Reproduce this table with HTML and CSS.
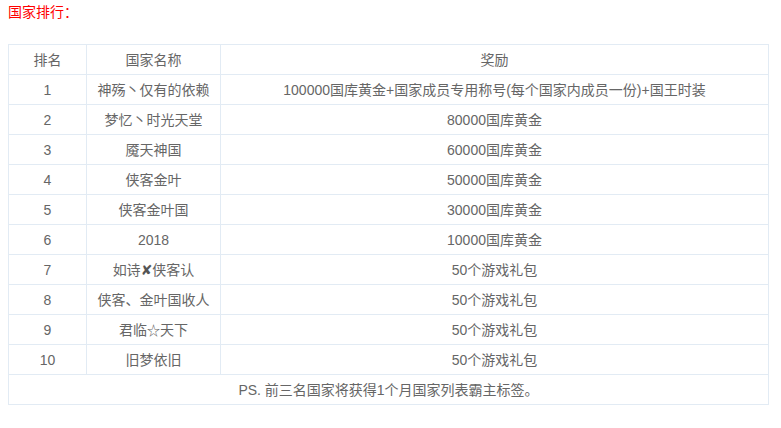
FILE: index.html
```html
<!DOCTYPE html>
<html lang="zh-CN">
<head>
<meta charset="utf-8">
<title>国家排行</title>
<link rel="stylesheet" href="styles.css">
</head>
<body>
<div class="title">国家排行：</div>
<table class="rank">
  <colgroup>
    <col class="c1"><col class="c2"><col class="c3">
  </colgroup>
  <tr><td>排名</td><td>国家名称</td><td>奖励</td></tr>
  <tr><td>1</td><td>神殇丶仅有的依赖</td><td>100000国库黄金+国家成员专用称号(每个国家内成员一份)+国王时装</td></tr>
  <tr><td>2</td><td>梦忆丶时光天堂</td><td>80000国库黄金</td></tr>
  <tr><td>3</td><td>魇天神国</td><td>60000国库黄金</td></tr>
  <tr><td>4</td><td>侠客金叶</td><td>50000国库黄金</td></tr>
  <tr><td>5</td><td>侠客金叶国</td><td>30000国库黄金</td></tr>
  <tr><td>6</td><td>2018</td><td>10000国库黄金</td></tr>
  <tr><td>7</td><td>如诗<span class="x">✘</span>侠客认</td><td>50个游戏礼包</td></tr>
  <tr><td>8</td><td>侠客、金叶国收人</td><td>50个游戏礼包</td></tr>
  <tr><td>9</td><td>君临<span class="star">☆</span>天下</td><td>50个游戏礼包</td></tr>
  <tr><td>10</td><td>旧梦依旧</td><td>50个游戏礼包</td></tr>
  <tr><td colspan="3">PS. 前三名国家将获得1个月国家列表霸主标签。</td></tr>
</table>
</body>
</html>
```
FILE: styles.css
```css
html, body {
  margin: 0;
  padding: 0;
  background: #fff;
}
body {
  padding: 0 8px;
  font-family: "Liberation Sans", "Noto Sans CJK SC", sans-serif;
  font-size: 14px;
  color: #666;
}
.title {
  color: #f00;
  font-size: 14px;
  line-height: 24px;
  height: 24px;
  margin-bottom: 20px;
}
.rank {
  border-collapse: collapse;
  width: 761px;
  table-layout: fixed;
}
.rank .c1 { width: 78px; }
.rank .c2 { width: 134px; }
.rank td {
  border: 1px solid #e2ebf4;
  height: 29px;
  padding: 0;
  text-align: center;
  line-height: 20px;
}
.x {
  font-family: "DejaVu Sans", sans-serif;
  font-size: 14px;
  color: #555;
}
.star {
  font-family: "Noto Sans CJK SC", "DejaVu Sans", sans-serif;
  font-size: 13px;
}
```
